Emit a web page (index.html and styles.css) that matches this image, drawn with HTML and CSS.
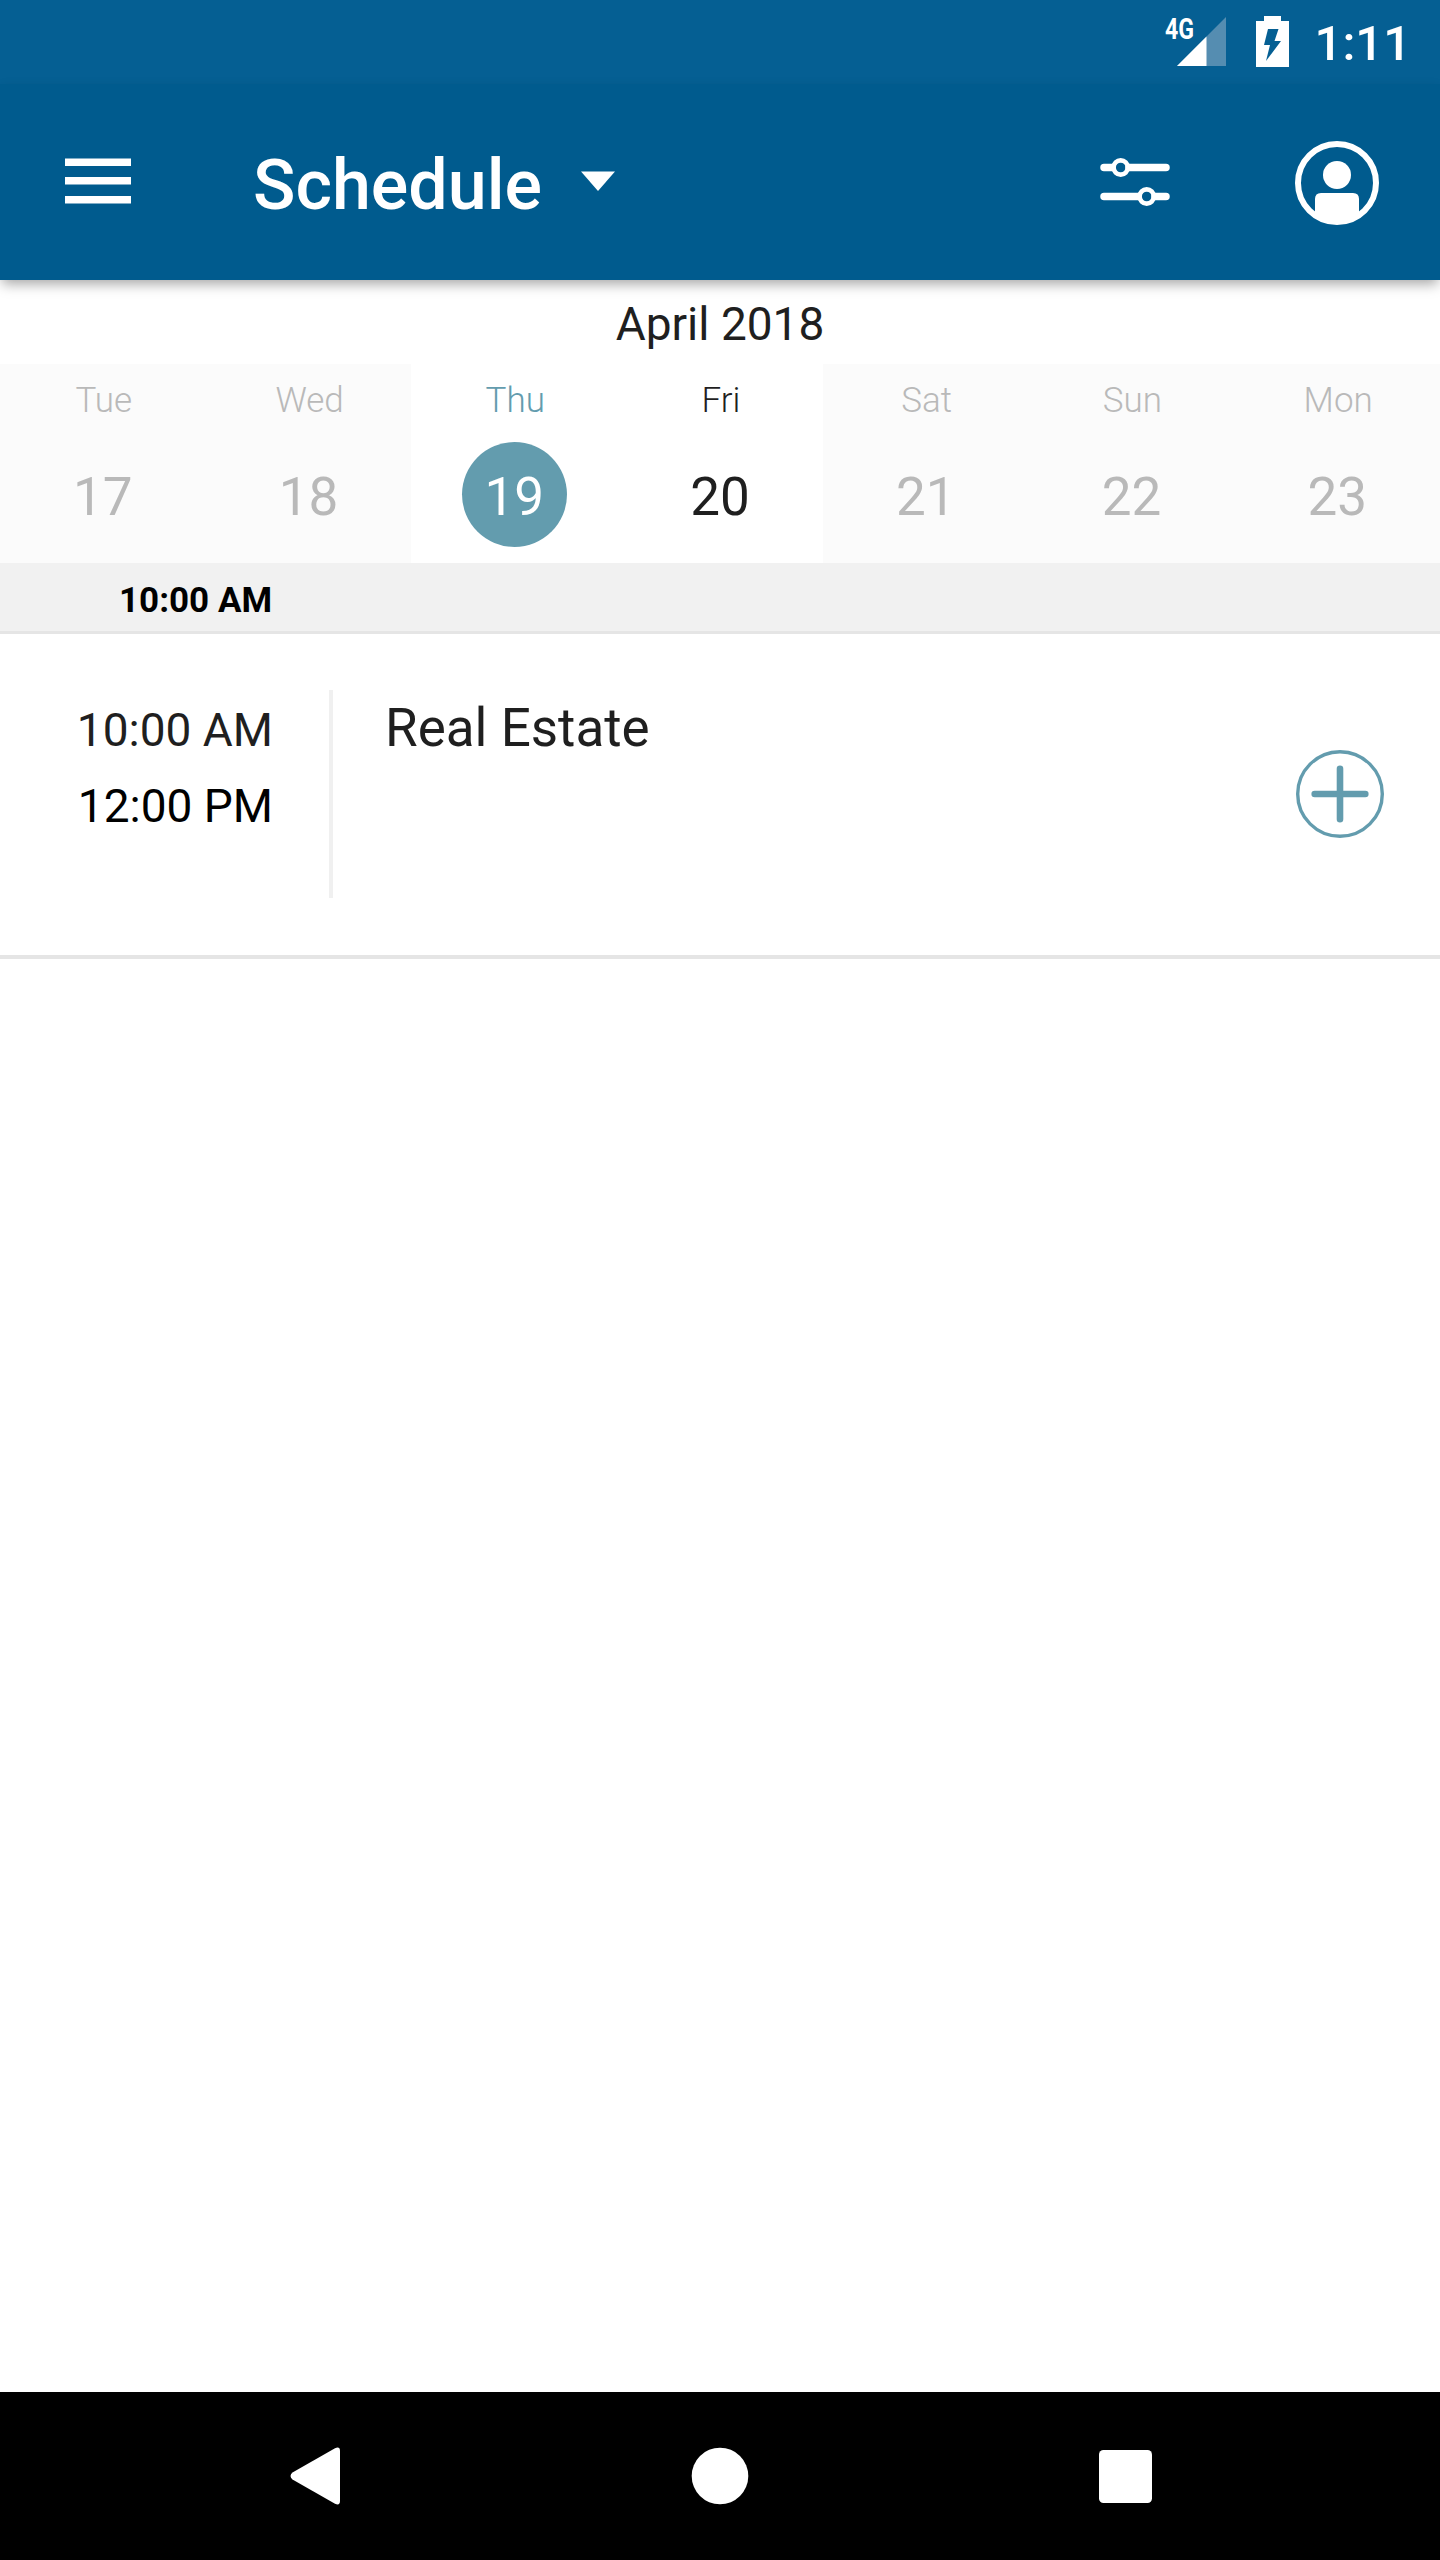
FILE: index.html
```html
<!DOCTYPE html>
<html lang="en">
<head>
    <meta charset="UTF-8">
    <meta name="viewport" content="width=device-width, initial-scale=1.0">
    <title>Schedule</title>
    <link rel="stylesheet" href="styles.css">
</head>
<body>
    <div class="status-bar">
        <svg class="signal-icon" width="64" height="62" viewBox="0 -10 64 62">
            <path d="M14 50L63 1V50z" fill="#558db1"/>
            <path d="M14 50L43.500 20.500V50z" fill="#fff"/>
            <text class="network" x="2" y="23" textLength="29" lengthAdjust="spacingAndGlyphs">4G</text>
        </svg>
        <svg class="battery-icon" width="33" height="51" viewBox="0 0 33 51">
            <path d="M8 0H25V5H33V51H0V5H8z" fill="#fff"/>
            <path d="M12 13H22.500L18.500 25H25L10 45L14 29H8z" fill="#055f93"/>
        </svg>
        <span class="clock">1:11</span>
    </div>

    <header class="app-bar">
        <svg class="menu-icon" width="66" height="46" viewBox="0 0 66 46">
            <path d="M0 0.500H66V8H0zM0 19H66V26.500H0zM0 38H66V45.500H0z" fill="#fff"/>
        </svg>
        <h1 class="title">Schedule</h1>
        <svg class="caret-icon" width="34" height="20" viewBox="0 0 34 20">
            <path d="M0 0.500H34L17 20z" fill="#fff"/>
        </svg>
        <svg class="filter-icon" width="70" height="50" viewBox="0 0 70 50" fill="none" stroke="#fff" stroke-linecap="round">
            <path d="M4 10.500H12M29 10.500H66M4 39.500H38M55 39.500H66" stroke-width="7.500"/>
            <circle cx="20.700" cy="10.500" r="7.100" stroke-width="4.600"/>
            <circle cx="46.700" cy="39.500" r="7.100" stroke-width="4.600"/>
        </svg>
        <svg class="account-icon" width="84" height="84" viewBox="0 0 84 84">
            <circle cx="42" cy="42" r="39" fill="none" stroke="#fff" stroke-width="6"/>
            <circle cx="42" cy="34" r="14" fill="#fff"/>
            <path d="M20 73V58Q20 52 26 52H58Q64 52 64 58V73Q54 82 42 82T20 73z" fill="#fff"/>
        </svg>
    </header>

    <main class="content">
        <div class="month">April 2018</div>
        <div class="days">
            <div class="day disabled"><span class="name">Tue</span><span class="date">17</span></div>
            <div class="day disabled"><span class="name">Wed</span><span class="date">18</span></div>
            <div class="day selected"><span class="name">Thu</span><span class="date">19</span></div>
            <div class="day"><span class="name">Fri</span><span class="date">20</span></div>
            <div class="day disabled"><span class="name">Sat</span><span class="date">21</span></div>
            <div class="day disabled"><span class="name">Sun</span><span class="date">22</span></div>
            <div class="day disabled"><span class="name">Mon</span><span class="date">23</span></div>
        </div>

        <div class="time-header">10:00 AM</div>
        <div class="session">
            <div class="times">
                <div class="start">10:00 AM</div>
                <div class="end">12:00 PM</div>
            </div>
            <div class="session-title">Real Estate</div>
            <svg class="add-icon" width="88" height="88" viewBox="0 0 88 88" fill="none" stroke="#639cae">
                <circle cx="44" cy="44" r="42.300" stroke-width="3.400"/>
                <path d="M44 18.700V69.300M18.700 44H69.300" stroke-width="6.600" stroke-linecap="round"/>
            </svg>
        </div>
    </main>

    <nav class="nav-bar">
        <svg width="50" height="58" viewBox="0 0 50 58">
            <path d="M2.500 25.500L45 1.200Q50 -1 50 4V54Q50 59 45 56.800L2.500 32.500Q-1.500 29 2.500 25.500z" fill="#fff"/>
        </svg>
        <svg width="58" height="58" viewBox="0 0 58 58">
            <circle cx="29" cy="29" r="28.300" fill="#fff"/>
        </svg>
        <svg width="53" height="53" viewBox="0 0 53 53">
            <rect width="53" height="53" rx="4.500" fill="#fff"/>
        </svg>
    </nav>
</body>
</html>
```
FILE: styles.css
```css
* {
    box-sizing: border-box;
}
body {
    margin: 0;
    height: 2560px;
    display: flex;
    flex-direction: column;
    font-family: Roboto, sans-serif;
    color: #1f1f1f;
    background-color: #fff;
    overflow: hidden;
}
svg {
    display: block;
    flex: none;
}

/* status bar */
.status-bar {
    height: 84px;
    padding: 16px 29px 0 0;
    display: flex;
    justify-content: flex-end;
    align-items: flex-start;
    background-color: #055f93;
    color: #fff;
}
.signal-icon {
    margin: -10px 29px 0 0;
}
.network {
    font-size: 29px;
    font-weight: 700;
    fill: #fff;
}
.battery-icon {
    margin-right: 26px;
}
.clock {
    font-size: 49px;
    font-weight: 500;
    line-height: 56px;
}

/* app bar */
.app-bar {
    position: relative;
    height: 196px;
    padding: 0 61px 0 65px;
    display: flex;
    align-items: center;
    background-color: #005b8e;
    box-shadow: 0 6px 12px -2px rgba(0,0,0,0.35);
    color: #fff;
}
.menu-icon {
    margin-bottom: 2px;
}
.title {
    margin: 0 0 0 122px;
    padding-top: 6px;
    font-size: 70px;
    font-weight: 500;
    line-height: 84px;
}
.caret-icon {
    margin: 0 0 2px 39px;
}
.filter-icon {
    margin-left: auto;
}
.account-icon {
    margin: 2px 0 0 125px;
}

/* calendar strip */
.content {
    flex: 1;
}
.month {
    height: 84px;
    padding-top: 2px;
    font-size: 46px;
    line-height: 84px;
    text-align: center;
}
.days {
    display: flex;
    height: 199px;
}
.day {
    flex: 1;
    display: flex;
    flex-direction: column;
    align-items: center;
    padding-top: 17px;
}
.name {
    padding-left: 2px;
    font-size: 35px;
    font-weight: 300;
    line-height: 40px;
}
.date {
    width: 105px;
    height: 105px;
    margin-top: 21px;
    border-radius: 50%;
    font-size: 53px;
    line-height: 110px;
    text-align: center;
}
.disabled {
    background-color: #fbfbfb;
    color: #b9b9b9;
}
.selected .name {
    color: #639cae;
}
.selected .date {
    background-color: #639cae;
    color: #fff;
}

/* session list */
.time-header {
    height: 71px;
    padding: 3px 0 0 119px;
    background-color: #f1f1f1;
    border-bottom: 3px solid #e5e5e5;
    color: #000;
    font-size: 35px;
    font-weight: 700;
    line-height: 70px;
}
.session {
    height: 325px;
    padding: 56px 56px 57px 0;
    display: flex;
    border-bottom: 4px solid #e5e5e5;
}
.times {
    width: 333px;
    padding: 2px 56px 0 0;
    border-right: 4px solid #f0f0f0;
    font-size: 46px;
    line-height: 76px;
    text-align: right;
}
.end {
    color: #000;
}
.session-title {
    flex: 1;
    padding-left: 52px;
    font-size: 53px;
    line-height: 76px;
}
.add-icon {
    margin-top: 60px;
}

/* system navigation */
.nav-bar {
    height: 168px;
    padding: 0 288px 0 290px;
    display: flex;
    justify-content: space-between;
    align-items: center;
    background-color: #000;
}
```
